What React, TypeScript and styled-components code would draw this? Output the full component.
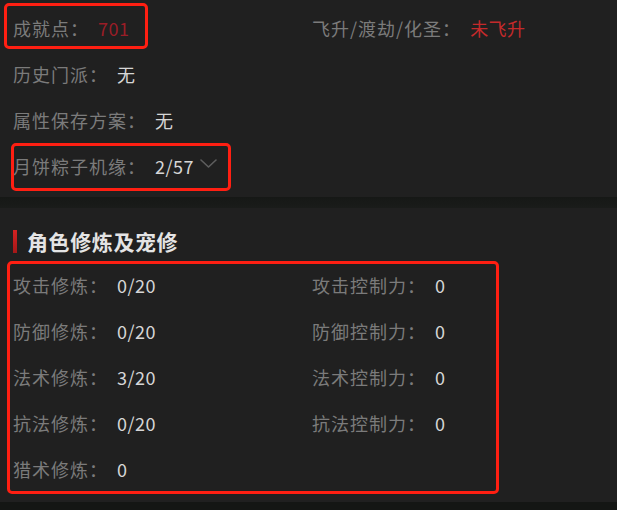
import React from 'react';
import { styled, createGlobalStyle } from 'styled-components';

const GlobalStyle = createGlobalStyle`
  html, body {
    margin: 0;
    padding: 0;
    background: #202020;
  }
  body {
    font-family: 'Noto Sans CJK SC', 'Noto Sans', sans-serif;
  }
`;

type Item = { label: string; value: string; tone?: 'dim' | 'bright' | 'plain'; chevron?: boolean };

const baseInfo: Item[][] = [
  [
    { label: '成就点：', value: '701', tone: 'dim' },
    { label: '飞升/渡劫/化圣：', value: '未飞升', tone: 'bright' },
  ],
  [{ label: '历史门派：', value: '无' }],
  [{ label: '属性保存方案：', value: '无' }],
  [{ label: '月饼粽子机缘：', value: '2/57', chevron: true }],
];

const cultivation: Item[][] = [
  [
    { label: '攻击修炼：', value: '0/20' },
    { label: '攻击控制力：', value: '0' },
  ],
  [
    { label: '防御修炼：', value: '0/20' },
    { label: '防御控制力：', value: '0' },
  ],
  [
    { label: '法术修炼：', value: '3/20' },
    { label: '法术控制力：', value: '0' },
  ],
  [
    { label: '抗法修炼：', value: '0/20' },
    { label: '抗法控制力：', value: '0' },
  ],
  [{ label: '猎术修炼：', value: '0' }],
];

const Chevron = () => (
  <svg width="17" height="9" viewBox="0 0 17 9" fill="none">
    <path d="M1 1 L8.5 8 L16 1" stroke="#5e5e5e" strokeWidth="1.6" strokeLinecap="round" strokeLinejoin="round" />
  </svg>
);

const Field = ({ item }: { item: Item }) => (
  <Cell>
    <Label>{item.label}</Label>
    <Value $tone={item.tone ?? 'plain'}>{item.value}</Value>
    {item.chevron && (
      <ChevronWrap>
        <Chevron />
      </ChevronWrap>
    )}
  </Cell>
);

const Rows = ({ rows }: { rows: Item[][] }) => (
  <>
    {rows.map((row, i) => (
      <Row key={i}>
        {row.map((item) => (
          <Field key={item.label} item={item} />
        ))}
      </Row>
    ))}
  </>
);

const App = () => {
  return (
    <Page>
      <GlobalStyle />
      <InfoBlock>
        <Rows rows={baseInfo} />
      </InfoBlock>
      <Divider />
      <Section>
        <SectionTitle>角色修炼及宠修</SectionTitle>
        <Grid>
          <Rows rows={cultivation} />
        </Grid>
      </Section>
      <BottomBand />

      {/* red annotation frames drawn over the screenshot */}
      <Frame style={{ left: 4, top: 3, width: 144, height: 46 }} />
      <Frame style={{ left: 11, top: 143, width: 220, height: 48 }} />
      <Frame style={{ left: 7, top: 261, width: 492, height: 233 }} />
    </Page>
  );
};

const Page = styled.div`
  position: relative;
  width: 617px;
  height: 510px;
  overflow: hidden;
  background: #202020;
  display: flex;
  flex-direction: column;
`;

const InfoBlock = styled.div`
  padding: 5px 0 0 13px;
`;

const Row = styled.div`
  display: grid;
  grid-template-columns: 299px auto;
  height: 46px;
  align-items: center;
`;

const Cell = styled.div`
  display: flex;
  align-items: center;
  white-space: nowrap;
  font-size: 18px;
  letter-spacing: 1px;
  line-height: 46px;
`;

const Label = styled.span`
  color: #7b7b7b;
  margin-right: 9px;
`;

const Value = styled.span<{ $tone: 'dim' | 'bright' | 'plain' }>`
  color: ${({ $tone }) => ($tone === 'dim' ? '#9a1d27' : $tone === 'bright' ? '#c42a2b' : '#d6d6d6')};
  letter-spacing: 0.5px;
`;

const ChevronWrap = styled.span`
  display: flex;
  align-items: center;
  margin-left: 6px;
  margin-top: -6px;
`;

const Divider = styled.div`
  margin-top: 8px;
  height: 11px;
  background: linear-gradient(#161816, #1a1c1a);
`;

const Section = styled.section`
  padding: 19px 0 0 13px;
  flex: 1;
`;

const SectionTitle = styled.h3`
  margin: 0;
  display: flex;
  align-items: center;
  height: 28px;
  font-size: 21px;
  font-weight: 700;
  letter-spacing: 0.6px;
  color: #e4e4e4;

  &::before {
    content: '';
    width: 4px;
    height: 23px;
    margin-right: 10px;
    background: linear-gradient(#d42222, #a41818);
  }
`;

const Grid = styled.div`
  margin-top: 7px;
`;

const BottomBand = styled.div`
  height: 8px;
  background: #141614;
`;

const Frame = styled.div`
  position: absolute;
  box-sizing: border-box;
  border: 3px solid #ff1f12;
  border-radius: 5px;
  pointer-events: none;
`;

export default App;
